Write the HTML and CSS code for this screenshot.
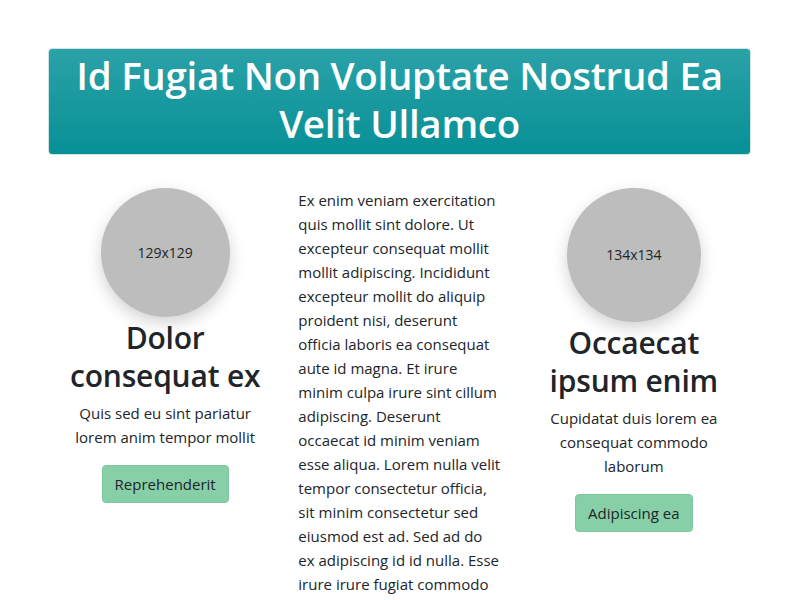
FILE: index.html
```html
<!DOCTYPE html>
<html>
<head>
<meta charset="utf-8">
<link rel="stylesheet" href="styles.css">
</head>
<body>
<div class="container">
  <header class="banner">
    <h1>Id Fugiat Non Voluptate Nostrud Ea Velit Ullamco</h1>
  </header>
  <div class="row">
    <div class="col feature">
      <div class="avatar a129">129x129</div>
      <h2>Dolor consequat ex</h2>
      <p>Quis sed eu sint pariatur lorem anim tempor mollit</p>
      <button class="btn">Reprehenderit</button>
    </div>
    <div class="col text">
      <p>Ex enim veniam exercitation quis mollit sint dolore. Ut excepteur consequat mollit mollit adipiscing. Incididunt excepteur mollit do aliquip proident nisi, deserunt officia laboris ea consequat aute id magna. Et irure minim culpa irure sint cillum adipiscing. Deserunt occaecat id minim veniam esse aliqua. Lorem nulla velit tempor consectetur officia, sit minim consectetur sed eiusmod est ad. Sed ad do ex adipiscing id id nulla. Esse irure irure fugiat commodo</p>
    </div>
    <div class="col feature">
      <div class="avatar a134">134x134</div>
      <h2>Occaecat ipsum enim</h2>
      <p>Cupidatat duis lorem ea consequat commodo laborum</p>
      <button class="btn">Adipiscing ea</button>
    </div>
  </div>
</div>
</body>
</html>
```
FILE: styles.css
```css
* { box-sizing: border-box; }
html, body { margin: 0; padding: 0; background: #fff; }
body {
  font-family: "Open Sans", "Noto Sans", sans-serif;
  font-size: 15px;
  line-height: 24px;
  color: #212529;
}
.container {
  width: 703px;
  margin-left: 48px;
  padding-top: 48px;
}
.banner {
  background: linear-gradient(#2aa2a8, #079096);
  border: 1px solid #cde3e4;
  border-radius: 4px;
  height: 107px;
  padding-bottom: 5px;
  display: flex;
  align-items: center;
  justify-content: center;
  text-align: center;
}
.banner h1 {
  margin: 0;
  color: #fff;
  font-size: 38.5px;
  font-weight: 600;
  line-height: 48px;
  letter-spacing: -0.3px;
}
.row {
  display: grid;
  grid-template-columns: 1fr 1fr 1fr;
  margin-top: 33px;
}
.col { padding: 0 16px; }
.feature {
  display: flex;
  flex-direction: column;
  align-items: center;
  text-align: center;
}
.avatar {
  border-radius: 50%;
  background: #bdbdbd;
  display: flex;
  align-items: center;
  justify-content: center;
  font-size: 14px;
  color: #212529;
  box-shadow: 0 6px 16px rgba(0,0,0,0.18);
}
.a129 { width: 129px; height: 129px; }
.a134 { width: 134px; height: 134px; }
.feature h2 {
  margin: 2px 0 6px;
  font-size: 30px;
  line-height: 38px;
  font-weight: 600;
  letter-spacing: -0.2px;
}
.feature p { margin: 0 0 16px; }
.btn {
  font-family: inherit;
  font-size: 15px;
  line-height: 24px;
  color: #212529;
  background: #86cfa7;
  border: 1px solid #7bc89d;
  border-radius: 4px;
  padding: 6px 12px;
}
.text p { margin: 0; padding-top: 0; }
```
